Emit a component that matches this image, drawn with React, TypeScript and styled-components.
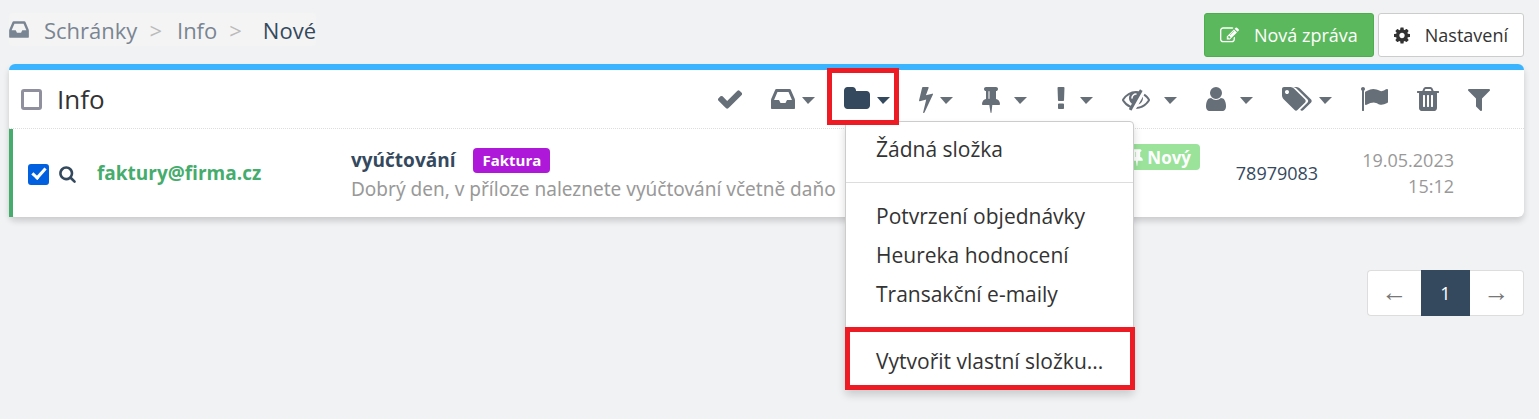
import React from "react";
import styled, { createGlobalStyle, css } from "styled-components";

const GlobalStyle = createGlobalStyle`
  *, *::before, *::after { box-sizing: border-box; }
  body {
    margin: 0;
    background: #f1f2f4;
    color: #333;
    font-family: "Open Sans", "Liberation Sans", sans-serif;
    font-size: 18px;
  }
  button, input { font: inherit; margin: 0; }
  a { color: inherit; text-decoration: none; }
`;

type Glyph = { x: number; w: number; d: string };

/* Glyphs are drawn on a 1792-unit tall grid; x and w give the horizontal extent. */
const glyphs = {
  check: { x: 128, w: 1536, d: "M1671 566q0 40-28 68l-724 724-136 136q-28 28-68 28t-68-28l-136-136-362-362q-28-28-28-68t28-68l136-136q28-28 68-28t68 28l294 295 656-657q28-28 68-28t68 28l136 136q28 28 28 68z" },
  inbox: { x: 128, w: 1536, d: "M1151 960h316q-1-3-2.500-8.500t-2.500-7.500l-212-496h-708l-212 496q-1 3-2.500 8.500t-2.500 7.500h316l95 192h320zm513 30v482q0 26-19 45t-45 19h-1408q-26 0-45-19t-19-45v-482q0-62 25-123l238-552q10-25 36.500-42t52.500-17h832q26 0 52.500 17t36.500 42l238 552q25 61 25 123z" },
  folder: { x: 64, w: 1664, d: "M1728 608v704q0 92-66 158t-158 66h-1216q-92 0-158-66t-66-158v-960q0-92 66-158t158-66h320q92 0 158 66t66 158v32h672q92 0 158 66t66 158z" },
  bolt: { x: 448, w: 896, d: "M1333 566q18 20 7 44l-540 1157q-13 25-42 25-4 0-14-2-17-5-25.500-19t-4.500-30l197-808-406 101q-4 1-12 1-18 0-31-11-18-15-13-39l201-825q4-14 16-23t28-9h328q19 0 32 12.500t13 29.500q0 8-5 18l-171 463 396-98q8-2 12-2 19 0 34 15z" },
  pin: { x: 320, w: 1152, d: "M800 864v-448q0-14-9-23t-23-9-23 9-9 23v448q0 14 9 23t23 9 23-9 9-23zm672 352q0 26-19 45t-45 19h-429l-51 483q-2 12-10.500 20.500t-20.500 8.500h-1q-27 0-32-27l-76-485h-404q-26 0-45-19t-19-45q0-123 78.500-221.500t177.500-98.500v-512q-52 0-90-38t-38-90 38-90 90-38h640q52 0 90 38t38 90-38 90-90 38v512q99 0 177.500 98.500t78.500 221.500z" },
  exclamation: { x: 576, w: 640, d: "M1088 1248v224q0 26-19 45t-45 19h-256q-26 0-45-19t-19-45v-224q0-26 19-45t45-19h256q26 0 45 19t19 45zm30-1056l-28 768q-1 26-20.500 45t-45.500 19h-256q-26 0-45.500-19t-20.500-45l-28-768q-1-26 17.500-45t44.500-19h320q26 0 44.500 19t17.500 45z" },
  eyeSlash: { x: 0, w: 1792, d: "M555 1335l78-141q-87-63-136-159t-49-203q0-121 61-225-229 117-381 353 167 258 427 375zm389-759q0-20-14-34t-34-14q-125 0-214.500 89.500t-89.500 214.500q0 20 14 34t34 14 34-14 14-34q0-86 61-147t147-61q20 0 34-14t14-34zm363-191q0 7-1 9-106 189-316 567t-315 566l-49 89q-10 16-28 16-12 0-134-70-16-10-16-28 0-12 44-87-143-65-263.500-173t-208.500-245q-20-31-20-69t20-69q153-235 380-371t496-136q89 0 180 17l54-97q10-16 28-16 5 0 18 6t31 15.500 33 18.500 31.500 18.500 19.500 11.500q16 10 16 27zm37 447q0 139-79 253.500t-209 164.500l280-502q8 45 8 84zm448 128q0 35-20 69-39 64-109 145-150 172-347.500 267t-419.500 95l74-132q212-18 392.500-137t301.500-307q-115-179-282-294l63-112q95 64 182.500 153t144.500 184q20 34 20 69z" },
  user: { x: 256, w: 1280, d: "M1536 1399q0 109-62.500 187t-150.500 78h-854q-88 0-150.500-78t-62.500-187q0-85 8.500-160.500t31.500-152 58.500-131 94-89 134.500-34.500q131 128 313 128t313-128q76 0 134.500 34.500t94 89 58.500 131 31.500 152 8.500 160.500zm-256-887q0 159-112.500 271.500t-271.500 112.500-271.500-112.500-112.500-271.500 112.500-271.500 271.500-112.500 271.500 112.500 112.500 271.500z" },
  tags: { x: 0, w: 1920, d: "M448 448q0-53-37.500-90.500t-90.500-37.500-90.500 37.500-37.500 90.500 37.500 90.500 90.500 37.500 90.500-37.500 37.500-90.500zm1067 576q0 53-37 90l-491 492q-39 37-91 37-53 0-90-37l-715-716q-38-37-64.500-101t-26.500-117v-416q0-52 38-90t90-38h416q53 0 117 26.500t102 64.500l715 714q37 39 37 91zm384 0q0 53-37 90l-491 492q-39 37-91 37-36 0-59-14t-53-45l470-470q37-37 37-90 0-52-37-91l-715-714q-38-38-102-64.500t-117-26.500h224q53 0 117 26.500t102 64.500l715 714q37 39 37 91z" },
  flag: { x: 64, w: 1728, d: "M320 256q0 72-64 110v1266q0 13-9.500 22.500t-22.500 9.500h-64q-13 0-22.500-9.500t-9.500-22.500v-1266q-64-38-64-110 0-53 37.500-90.500t90.500-37.500 90.500 37.500 37.500 90.500zm1472 64v763q0 25-12.500 38.500t-39.500 27.500q-215 116-369 116-61 0-123.500-22t-108.500-48-115.500-48-142.500-22q-192 0-464 146-17 9-33 9-26 0-45-19t-19-45v-742q0-32 31-55 21-14 79-43 236-120 421-120 107 0 200 29t219 88q38 19 88 19 54 0 117.500-21t110-47 88-47 54.500-21q26 0 45 19t19 45z" },
  trash: { x: 192, w: 1408, d: "M704 1376v-704q0-14-9-23t-23-9h-64q-14 0-23 9t-9 23v704q0 14 9 23t23 9h64q14 0 23-9t9-23zm256 0v-704q0-14-9-23t-23-9h-64q-14 0-23 9t-9 23v704q0 14 9 23t23 9h64q14 0 23-9t9-23zm256 0v-704q0-14-9-23t-23-9h-64q-14 0-23 9t-9 23v704q0 14 9 23t23 9h64q14 0 23-9t9-23zm-544-992h448l-48-117q-7-9-17-11h-317q-10 2-17 11zm928 32v64q0 14-9 23t-23 9h-96v948q0 83-47 143.500t-113 60.500h-832q-66 0-113-58.500t-47-141.500v-952h-96q-14 0-23-9t-9-23v-64q0-14 9-23t23-9h309l70-167q15-37 54-63t79-26h320q40 0 79 26t54 63l70 167h309q14 0 23 9t9 23z" },
  filter: { x: 192, w: 1408, d: "M1595 295q17 41-14 70l-493 493v742q0 42-39 59-13 5-25 5-27 0-45-19l-256-256q-19-19-19-45v-486l-493-493q-31-29-14-70 17-39 59-39h1280q42 0 59 39z" },
  search: { x: 64, w: 1664, d: "M1216 832q0-185-131.500-316.500t-316.500-131.500-316.500 131.500-131.500 316.500 131.500 316.500 316.500 131.500 316.500-131.500 131.500-316.500zm512 832q0 52-38 90t-90 38q-54 0-90-38l-343-342q-179 124-399 124-143 0-273.500-55.500t-225-150-150-225-55.500-273.500 55.500-273.500 150-225 225-150 273.500-55.500 273.500 55.500 225 150 150 225 55.500 273.500q0 220-124 399l343 343q37 37 37 90z" },
  cog: { x: 128, w: 1536, d: "M1152 896q0-106-75-181t-181-75-181 75-75 181 75 181 181 75 181-75 75-181zm512-109v222q0 12-8 23t-20 13l-185 28q-19 54-39 91 35 50 107 138 10 12 10 25t-9 23q-27 37-99 108t-94 71q-12 0-26-9l-138-108q-44 23-91 38-16 136-29 186-7 28-36 28h-222q-14 0-24.500-8.500t-11.500-21.500l-28-184q-49-16-90-37l-141 107q-10 9-25 9-14 0-25-11-126-114-165-168-7-10-7-23 0-12 8-23 15-21 51-66.500t54-70.500q-27-50-41-99l-183-27q-13-2-21-12.500t-8-23.500v-222q0-12 8-23t19-13l186-28q14-46 39-92-40-57-107-138-10-12-10-24 0-10 9-23 26-36 98.500-107.500t94.500-71.500q13 0 26 10l138 107q44-23 91-38 16-136 29-186 7-28 36-28h222q14 0 24.500 8.500t11.500 21.500l28 184q49 16 90 37l142-107q9-9 24-9 13 0 25 10 129 119 165 170 7 8 7 22 0 12-8 23-15 21-51 66.500t-54 70.500q26 50 41 98l183 28q13 2 21 12.500t8 23.500z" },
  edit: { x: 0, w: 1792, d: "M888 1184l116-116-152-152-116 116v56h96v96h56zm440-720q-16-16-33 1l-350 350q-17 17-1 33t33-1l350-350q17-17 1-33zm80 594v190q0 119-84.500 203.500t-203.500 84.500h-832q-119 0-203.500-84.500t-84.500-203.500v-832q0-119 84.500-203.500t203.500-84.500h832q63 0 117 25 15 7 18 23 3 17-9 29l-49 49q-14 14-32 8-23-6-45-6h-832q-66 0-113 47t-47 113v832q0 66 47 113t113 47h832q66 0 113-47t47-113v-126q0-13 9-22l64-64q15-15 35-7t20 29zm-96-738l288 288-672 672h-288v-288zm444 132l-92 92-288-288 92-92q28-28 68-28t68 28l152 152q28 28 28 68t-28 68z" },
} satisfies Record<string, Glyph>;

type GlyphName = keyof typeof glyphs;

const Svg = styled.svg`
  display: block;
  flex: none;
  fill: currentColor;
`;

function Icon({ name, size }: { name: GlyphName; size: number }) {
  const g = glyphs[name];
  return (
    <Svg
      aria-hidden="true"
      height={size}
      width={Math.round((g.w * size) / 1792)}
      viewBox={`${g.x} 0 ${g.w} 1792`}
    >
      <path d={g.d} />
    </Svg>
  );
}

const Page = styled.main`
  min-height: 100vh;
  padding: 13px 15px 0 9px;
`;

const TopBar = styled.header`
  display: flex;
  justify-content: space-between;
  align-items: flex-start;
  height: 51px;
`;

const Breadcrumb = styled.nav`
  display: flex;
  align-items: center;
  height: 33px;
  border-radius: 4px;
  background: #f4f4f4;
  color: #7a8593;
  font-size: 22px;
  line-height: 32px;
`;

const Crumb = styled.a`
  margin-left: 15px;
`;

const Separator = styled.span`
  margin-left: 12px;
  color: #bbb;
`;

const CurrentCrumb = styled.span`
  margin-left: 21px;
  color: #34495e;
`;

const Actions = styled.div`
  display: flex;
  gap: 4px;
`;

const ActionButton = styled.button<{ $primary?: boolean }>`
  display: flex;
  align-items: center;
  gap: 15px;
  height: 44px;
  padding: 0 15px;
  border: 1px solid ${(p) => (p.$primary ? "#4cae4c" : "#ccc")};
  border-radius: 3px;
  background: ${(p) => (p.$primary ? "#5cb85c" : "#fff")};
  color: ${(p) => (p.$primary ? "#fff" : "#333")};
  font-size: 18px;
`;

const Panel = styled.section`
  border-top: 6px solid #3ab4ff;
  border-radius: 6px;
  background: #fff;
  box-shadow: 0 4px 6px rgba(0, 0, 0, 0.16);
`;

const PanelHeader = styled.div`
  display: flex;
  align-items: center;
  justify-content: space-between;
  height: 59px;
  padding: 0 34px 0 12px;
  border-bottom: 1px dotted #ddd;
`;

const PanelTitle = styled.label`
  display: flex;
  align-items: center;
  gap: 15px;
  font-size: 26px;
  line-height: 36px;
`;

const CheckBox = styled.input`
  appearance: none;
  display: grid;
  place-items: center;
  flex: none;
  width: 21px;
  height: 21px;
  border: 3px solid #8f8f9d;
  border-radius: 3px;
  background: #fff;

  &:checked {
    border-color: #0060df;
    background: #0060df;
  }

  &:checked::before {
    content: "";
    width: 8px;
    height: 14px;
    margin-top: -4px;
    border: solid #fff;
    border-width: 0 3px 3px 0;
    transform: rotate(42deg);
  }
`;

const Toolbar = styled.div`
  display: flex;
  align-items: center;
  gap: 29px;
`;

const ToolButton = styled.button<{ $wide?: boolean; $active?: boolean }>`
  display: flex;
  align-items: center;
  gap: ${(p) => (p.$wide ? 14 : 7)}px;
  height: 28px;
  padding: 0;
  border: 0;
  background: none;
  color: ${(p) => (p.$active ? "#34495e" : "#666e78")};
`;

const Caret = styled.span`
  margin-top: 3px;
  border: solid transparent;
  border-width: 7px 7px 0 6px;
  border-top-color: currentColor;
`;

const MenuAnchor = styled.div`
  position: relative;
`;

const highlight = css`
  content: "";
  position: absolute;
  border: 5px solid #ed1c24;
  pointer-events: none;
`;

const HighlightedTool = styled.div`
  &::after {
    ${highlight}
    inset: -17px -9px -12px -17px;
    z-index: 3;
  }
`;

const Menu = styled.ul`
  position: absolute;
  z-index: 2;
  top: 36px;
  left: 1px;
  width: 289px;
  margin: 0;
  padding: 8px 0;
  border: 1px solid #ccc;
  border-radius: 4px;
  background: #fff;
  box-shadow: 0 5px 8px rgba(0, 0, 0, 0.16);
  list-style: none;
`;

const MenuEntry = styled.li<{ $highlighted?: boolean }>`
  position: relative;

  ${(p) =>
    p.$highlighted &&
    css`
      &::after {
        ${highlight}
        inset: -15px -2px -9px -1px;
      }
    `}
`;

const MenuLink = styled.a`
  display: block;
  padding: 0 30px;
  font-size: 21px;
  line-height: 39px;
  white-space: nowrap;
`;

const MenuDivider = styled.li`
  height: 1px;
  margin: 13px 0 14px;
  background: #ddd;
`;

const MessageTable = styled.table`
  width: 100%;
  table-layout: fixed;
  border-collapse: collapse;
`;

const MessageRow = styled.tr`
  height: 88px;
  box-shadow: inset 4px 0 #46ac6d;
`;

const Cell = styled.td<{ $width?: number; $align?: string }>`
  width: ${(p) => (p.$width ? `${p.$width}px` : "auto")};
  padding: 0;
  text-align: ${(p) => p.$align ?? "left"};
  white-space: nowrap;
`;

const SelectGroup = styled.div`
  display: flex;
  align-items: center;
  gap: 10px;
  padding: 2px 0 0 19px;
  color: #34495e;
`;

const PreviewButton = styled.button`
  padding: 0;
  border: 0;
  background: none;
  color: inherit;
`;

const messageFont = css`
  font-family: "Noto Sans", "Open Sans", sans-serif;
  font-size: 19px;
`;

const Sender = styled.a`
  color: #46ac6d;
  font-size: 19px;
  font-weight: 700;
`;

const Message = styled.div`
  ${messageFont}
  padding-top: 3px;
  line-height: 29px;
`;

const SubjectLine = styled.div`
  display: flex;
  align-items: center;
  gap: 18px;
  color: #34495e;
  font-family: "Open Sans", sans-serif;
  font-weight: 700;
`;

const Preview = styled.div`
  color: #999;
`;

const Label = styled.span`
  padding: 0 9px;
  border-radius: 4px;
  background: #ae18d8;
  color: #fff;
  font-size: 15px;
  line-height: 25px;
`;

const Status = styled.span`
  display: inline-flex;
  align-items: center;
  gap: 4px;
  height: 26px;
  margin-bottom: 32px;
  padding: 0 9px;
  border-radius: 4px;
  background: #9be29b;
  color: #fff;
  font-size: 17px;
  font-weight: 700;
  vertical-align: middle;
`;

const OrderLink = styled.a`
  color: #34495e;
  font-size: 18px;
`;

const Time = styled.time`
  display: block;
  padding-right: 70px;
  color: #999;
  font-size: 18px;
  line-height: 26px;
`;

const Pagination = styled.nav`
  display: flex;
  width: max-content;
  margin: 53px 0 0 auto;
`;

const PageLink = styled.a<{ $current?: boolean; $side?: "left" | "right" }>`
  width: ${(p) => (p.$current ? 49 : 54)}px;
  height: 46px;
  border: 1px solid ${(p) => (p.$current ? "#34495e" : "#ddd")};
  ${(p) => p.$side === "left" && "border-right: 0; border-radius: 4px 0 0 4px;"}
  ${(p) => p.$side === "right" && "border-left: 0; border-radius: 0 4px 4px 0;"}
  background: ${(p) => (p.$current ? "#34495e" : "#fff")};
  color: ${(p) => (p.$current ? "#fff" : "#777")};
  font-size: ${(p) => (p.$current ? 18 : 26)}px;
  line-height: ${(p) => (p.$current ? 44 : 40)}px;
  text-align: center;
`;

type Tool = { icon: GlyphName; label: string; menu?: "near" | "wide" };

const toolsBefore: Tool[] = [
  { icon: "check", label: "Označit" },
  { icon: "inbox", label: "Schránka", menu: "near" },
];

const toolsAfter: Tool[] = [
  { icon: "bolt", label: "Akce", menu: "near" },
  { icon: "pin", label: "Stav", menu: "wide" },
  { icon: "exclamation", label: "Priorita", menu: "wide" },
  { icon: "eyeSlash", label: "Nepřečtené", menu: "wide" },
  { icon: "user", label: "Uživatel", menu: "wide" },
  { icon: "tags", label: "Štítky", menu: "near" },
  { icon: "flag", label: "Vlajka" },
  { icon: "trash", label: "Smazat" },
  { icon: "filter", label: "Filtr" },
];

function ToolItem({ icon, label, menu, active }: Tool & { active?: boolean }) {
  return (
    <ToolButton type="button" aria-label={label} $wide={menu === "wide"} $active={active}>
      <Icon name={icon} size={28} />
      {menu && <Caret />}
    </ToolButton>
  );
}

const folders = ["Potvrzení objednávky", "Heureka hodnocení", "Transakční e-maily"];

function FolderMenu() {
  return (
    <Menu>
      <MenuEntry>
        <MenuLink href="#none">Žádná složka</MenuLink>
      </MenuEntry>
      <MenuDivider role="separator" />
      {folders.map((name) => (
        <MenuEntry key={name}>
          <MenuLink href="#folder">{name}</MenuLink>
        </MenuEntry>
      ))}
      <MenuDivider role="separator" />
      <MenuEntry $highlighted>
        <MenuLink href="#create">Vytvořit vlastní složku...</MenuLink>
      </MenuEntry>
    </Menu>
  );
}

export default function App() {
  return (
    <>
      <GlobalStyle />
      <Page>
        <TopBar>
          <Breadcrumb>
            <Icon name="inbox" size={23} />
            <Crumb href="#inboxes">Schránky</Crumb>
            <Separator>&gt;</Separator>
            <Crumb href="#info">Info</Crumb>
            <Separator>&gt;</Separator>
            <CurrentCrumb>Nové</CurrentCrumb>
          </Breadcrumb>
          <Actions>
            <ActionButton type="button" $primary>
              <Icon name="edit" size={19} />
              Nová zpráva
            </ActionButton>
            <ActionButton type="button">
              <Icon name="cog" size={19} />
              Nastavení
            </ActionButton>
          </Actions>
        </TopBar>

        <Panel>
          <PanelHeader>
            <PanelTitle>
              <CheckBox type="checkbox" />
              Info
            </PanelTitle>
            <Toolbar>
              {toolsBefore.map((t) => (
                <ToolItem key={t.icon} {...t} />
              ))}
              <MenuAnchor>
                <HighlightedTool>
                  <ToolItem icon="folder" label="Složky" menu="near" active />
                </HighlightedTool>
                <FolderMenu />
              </MenuAnchor>
              {toolsAfter.map((t) => (
                <ToolItem key={t.icon} {...t} />
              ))}
            </Toolbar>
          </PanelHeader>

          <MessageTable>
            <tbody>
              <MessageRow>
                <Cell $width={88}>
                  <SelectGroup>
                    <CheckBox type="checkbox" aria-label="Vybrat zprávu" defaultChecked />
                    <PreviewButton type="button" aria-label="Náhled">
                      <Icon name="search" size={18} />
                    </PreviewButton>
                  </SelectGroup>
                </Cell>
                <Cell $width={254}>
                  <Sender href="#sender">faktury@firma.cz</Sender>
                </Cell>
                <Cell>
                  <Message>
                    <SubjectLine>
                      vyúčtování
                      <Label>Faktura</Label>
                    </SubjectLine>
                    <Preview>Dobrý den, v příloze naleznete vyúčtování včetně daňo</Preview>
                  </Message>
                </Cell>
                <Cell $width={100} $align="right">
                  <Status>
                    <Icon name="pin" size={18} />
                    Nový
                  </Status>
                </Cell>
                <Cell $width={154} $align="center">
                  <OrderLink href="#order">78979083</OrderLink>
                </Cell>
                <Cell $width={170} $align="right">
                  <Time>
                    19.05.2023
                    <br />
                    15:12
                  </Time>
                </Cell>
              </MessageRow>
            </tbody>
          </MessageTable>
        </Panel>

        <Pagination aria-label="Stránkování">
          <PageLink href="#prev" $side="left">←</PageLink>
          <PageLink href="#1" $current aria-current="page">1</PageLink>
          <PageLink href="#next" $side="right">→</PageLink>
        </Pagination>
      </Page>
    </>
  );
}
